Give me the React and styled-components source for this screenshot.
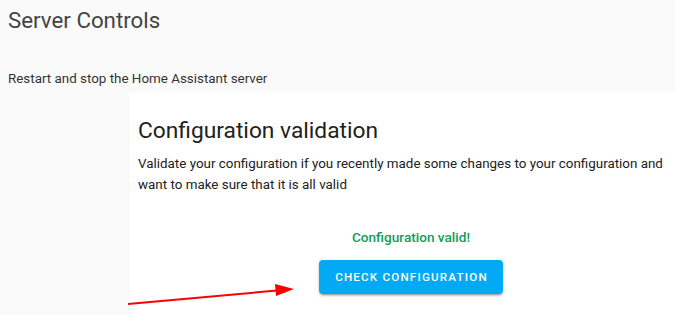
import React from "react";
import styled, { createGlobalStyle } from "styled-components";

const Global = createGlobalStyle`
  html, body { margin: 0; padding: 0; background: #fafafa; }
  body { font-family: Roboto, "Noto Sans", sans-serif; overflow: hidden; }
  * { box-sizing: border-box; }
`;

const Page = styled.div`
  position: relative;
  width: 675px;
  height: 315px;
  overflow: hidden;
  padding: 4px 0 0 8px;
  background: #fafafa;
`;

const Heading = styled.h1`
  margin: 0;
  font-size: 22.3px;
  font-weight: 400;
  line-height: 32px;
  color: #444;
`;

const Intro = styled.p`
  margin: 33px 0 0;
  font-size: 13.4px;
  line-height: 20px;
  color: #333;
`;

const Card = styled.section`
  margin: 4px 0 0 121px;
  width: 564px;
  background: #fff;
  padding: 22px 9px 40px;
  box-shadow: 0 2px 2px rgba(0,0,0,0.04);
`;

const CardTitle = styled.h2`
  margin: 0;
  font-size: 22.75px;
  font-weight: 400;
  line-height: 32px;
  color: #212121;
`;

const CardText = styled.p`
  margin: 6px 0 0;
  font-size: 13.4px;
  line-height: 21px;
  color: #212121;
`;

const Status = styled.div`
  margin-top: 32px;
  display: flex;
  flex-direction: column;
  align-items: center;
  gap: 13px;
`;

const Valid = styled.div`
  font-size: 13.6px;
  font-weight: 500;
  line-height: 20px;
  color: #0f9d58;
`;

const Button = styled.button`
  height: 34px;
  padding: 0 15px 0 16px;
  border: none;
  border-radius: 4px;
  background: #03a9f4;
  color: #fff;
  font-family: Roboto, sans-serif;
  font-size: 11.6px;
  font-weight: 500;
  letter-spacing: 1.2px;
  text-transform: uppercase;
  box-shadow: 0 3px 1px -2px rgba(0,0,0,0.2), 0 2px 2px 0 rgba(0,0,0,0.14), 0 1px 5px 0 rgba(0,0,0,0.12);
`;

const Arrow = styled.svg`
  position: absolute;
  left: 0;
  top: 0;
  pointer-events: none;
`;

export default function App() {
  return (
    <>
      <Global />
      <Page>
        <Heading>Server Controls</Heading>
        <Intro>Restart and stop the Home Assistant server</Intro>
        <Card>
          <CardTitle>Configuration validation</CardTitle>
          <CardText>
            Validate your configuration if you recently made some changes to your configuration and
            want to make sure that it is all valid
          </CardText>
          <Status>
            <Valid>Configuration valid!</Valid>
            <Button>Check configuration</Button>
          </Status>
        </Card>
        <Arrow width="675" height="315" viewBox="0 0 675 315">
          <line x1="128" y1="304" x2="277" y2="290.5" stroke="#ff0000" strokeWidth="2" />
          <polygon points="275,284 294,289 276,296" fill="#ff0000" />
        </Arrow>
      </Page>
    </>
  );
}
